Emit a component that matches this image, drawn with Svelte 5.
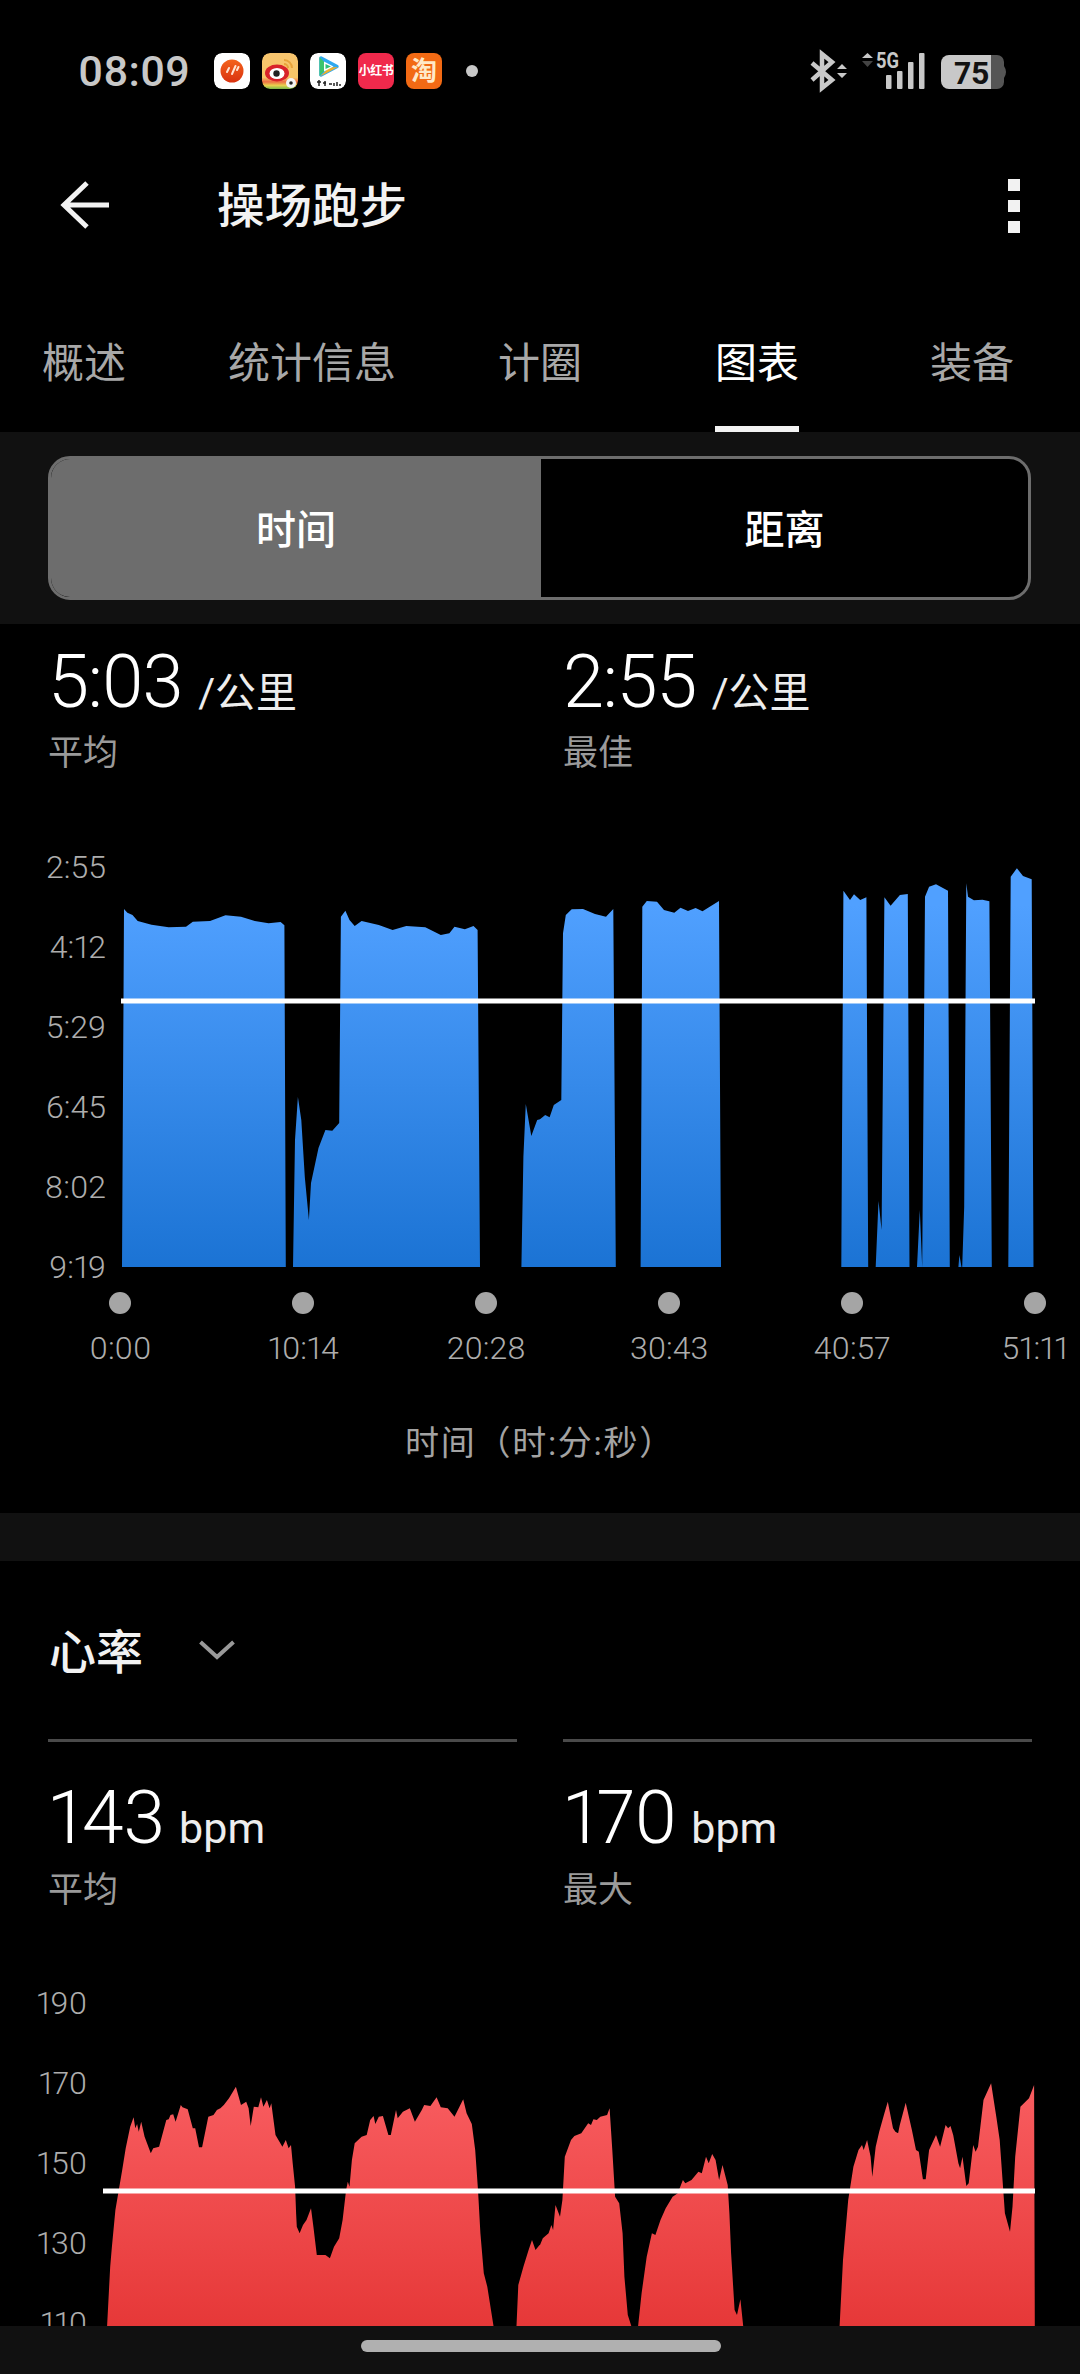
<script>
  const tabs = ['概述', '统计信息', '计圈', '图表', '装备'];
  const paceLabels = ['2:55', '4:12', '5:29', '6:45', '8:02', '9:19'];
  const hrLabels = ['190', '170', '150', '130', '110'];
  const ticks = ['0:00', '10:14', '20:28', '30:43', '40:57', '51:11'];

  const toPath = (pts) => 'M' + pts.map((p) => p.join(' ')).join('L') + 'Z';

  // pace blocks, page px
  const paceBlocks = [
    [[122,1267],[124,909],[127.4,912.7],[132.5,915],[137.7,921],[151.5,924.7],[168.7,927.3],[186,926.7],[192.8,921.7],[210,921],[225.5,915.3],[241,916.7],[254.8,921],[268.6,923.3],[280.6,922],[284.4,925.3],[285.8,1267]],
    [[293,1267],[295,1140],[297.9,1097],[301.3,1120],[304.8,1177],[308.9,1220],[311,1183],[318.5,1148],[325.4,1130],[332.3,1130.7],[339.2,1123],[340.9,916.7],[345.4,910.7],[349.5,920],[354.7,926],[361.6,921],[378.8,925],[392.6,930],[406.3,926],[425.3,927.3],[440.8,935],[449.4,933.3],[454.5,926.7],[464.9,929.3],[473.5,926],[477.6,930],[480,1267]],
    [[521.4,1267],[523.4,1156.7],[525.8,1104],[531.3,1136],[537.2,1120],[540,1119.3],[545.2,1115],[549.6,1117.3],[553.8,1105],[561.3,1100],[563,933.3],[565.8,915],[571.7,909.3],[583,909],[595,914],[606,916.7],[613.3,909],[615.8,1267]],
    [[640.6,1267],[642.3,906.7],[646.8,901],[657,901.7],[664,910],[674.3,912.7],[680.5,907.7],[688,911],[695.6,908],[702.5,911.3],[719,901],[721,1267]],
    [[841.3,1267],[843.4,890.7],[850,900],[854,894.3],[860.2,900],[866.4,897.3],[868.2,1267]],
    [[875.7,1267],[878.5,1201],[881.6,1230],[884.4,897.3],[890.6,905.7],[899.9,895],[907.8,894],[909.5,1267]],
    [[917,1267],[919.8,1210],[922.2,1267],[925,896.7],[929.1,886.7],[936,884.3],[948,890.7],[949.8,1267]],
    [[958.4,1267],[959.4,1255],[961.5,1267],[962.2,1267],[964.2,1206.7],[966.3,883.3],[968,896.7],[973.9,900.3],[982.5,899.7],[989.4,901.3],[991.8,1267]],
    [[1008.3,1267],[1010.7,876.7],[1016.9,868.3],[1023,876],[1031.7,879.3],[1033.5,1267]]
  ].map(toPath);

  // heart rate outline, traced on the crops: x is 2.904/px, y is 3/px from 2000
  const fromCrop = (base) => ([x, y]) => [+(x / 2.904 + base).toFixed(1), +(2000 + y / 3).toFixed(1)];
  const L = fromCrop(0);
  const R = fromCrop(540);

  const hrLeft = [[311,978],[320,800],[325,740],[335,630],[345,570],[355,510],[365,445],[378,380],[388,352],[393,385],[398,372],[403,395],[410,365],[420,410],[438,460],[445,445],[462,440],[483,360],[490,358],[495,345],[503,343],[510,365],[525,315],[530,322],[545,328],[560,385],[567,385],[578,442],[587,442],[605,350],[620,345],[630,330],[640,325],[650,315],[665,295],[685,260],[700,315],[715,305],[722,325],[728,378],[737,320],[750,322],[758,292],[765,320],[775,300],[783,325],[788,310],[800,405],[820,440],[830,420],[838,445],[845,435],[850,490],[857,560],[860,640],[862,680],[870,700],[880,675],[890,660],[903,625],[910,680],[920,765],[945,765],[958,775],[970,740],[985,715],[995,660],[1005,570],[1010,545],[1015,560],[1022,480],[1030,430],[1050,410],[1065,405],[1075,360],[1085,348],[1090,372],[1100,350],[1112,348],[1128,405],[1135,405],[1150,330],[1155,355],[1170,335],[1190,325],[1205,365],[1225,330],[1232,315],[1250,318],[1268,292],[1280,322],[1300,325],[1320,350],[1345,298],[1355,340],[1370,372],[1380,450],[1388,570],[1395,700],[1405,820],[1415,860],[1433,978]];
  const hrMidA = [[1500,978],[1505,855],[1520,800],[1535,750],[1545,720],[1555,750],[1567,735]];
  const hrMidB = [[0,735],[8,715],[25,700],[33,675],[38,690],[45,615],[58,650],[65,600],[72,470],[90,420],[100,408],[120,400],[140,370],[148,375],[155,358],[165,360],[175,350],[195,345],[202,325],[210,450],[218,590],[230,610],[240,700],[245,830],[255,945],[265,978]];
  const hrThird = [[285,978],[295,880],[310,770],[325,700],[335,705],[350,660],[365,625],[385,590],[400,580],[415,540],[422,550],[440,540],[460,515],[470,520],[482,470],[490,490],[500,462],[510,480],[520,540],[530,495],[545,555],[550,640],[555,760],[565,930],[572,945],[582,898],[590,978]];
  const hrLast = [[870,978],[880,780],[895,600],[910,500],[925,450],[935,435],[940,450],[950,420],[960,470],[965,530],[975,440],[985,395],[1000,340],[1010,305],[1025,385],[1032,395],[1040,400],[1045,375],[1062,308],[1080,390],[1092,450],[1100,455],[1112,538],[1120,538],[1130,450],[1150,405],[1162,440],[1178,375],[1185,385],[1192,378],[1200,405],[1215,490],[1220,505],[1227,470],[1238,558],[1245,550],[1258,435],[1265,455],[1272,440],[1288,300],[1310,250],[1325,350],[1335,420],[1350,640],[1365,695],[1372,620],[1380,470],[1395,320],[1420,295],[1435,255],[1437,978]];

  const hrBlocks = [
    hrLeft.map(L),
    [...hrMidA.map(L), ...hrMidB.map(R)],
    hrThird.map(R),
    hrLast.map(R)
  ].map(toPath);
</script>

<div class="page">
  <div class="status">
    <span class="clock">08:09</span>
    <div class="apps">
      <svg class="app" viewBox="0 0 36 36">
        <defs>
          <linearGradient id="redCircle" x1="0" y1="0" x2="0" y2="1">
            <stop offset="0" stop-color="#f4631c" />
            <stop offset="1" stop-color="#d9320f" />
          </linearGradient>
        </defs>
        <rect width="36" height="36" rx="8" fill="#fff" />
        <circle cx="18" cy="18" r="11.500" fill="url(#redCircle)" />
        <path d="M13 19l2-4M18 21l3.500-8M23 17l1.500-3" stroke="#ffe3d2" stroke-width="2" stroke-linecap="round" />
      </svg>
      <svg class="app" viewBox="0 0 36 36">
        <defs>
          <linearGradient id="weiboBg" x1="0" y1="0" x2="0" y2="1">
            <stop offset="0" stop-color="#f8c56f" />
            <stop offset="0.68" stop-color="#f6c566" />
            <stop offset="0.8" stop-color="#ee6f45" />
            <stop offset="0.9" stop-color="#e8d24e" />
            <stop offset="1" stop-color="#79b84b" />
          </linearGradient>
        </defs>
        <rect width="36" height="36" rx="8" fill="url(#weiboBg)" />
        <path d="M22 7a8 8 0 0 1 8 8M22 11a4 4 0 0 1 4 4" fill="none" stroke="#e8a33a" stroke-width="2" />
        <ellipse cx="15" cy="20" rx="12" ry="8.500" fill="#d8232a" />
        <ellipse cx="15" cy="20.500" rx="7.500" ry="5.500" fill="#fff" />
        <circle cx="14.500" cy="20.500" r="3.200" fill="#222" />
        <circle cx="29" cy="30" r="5" fill="#f4f4f4" />
        <circle cx="29" cy="30" r="1.800" fill="#222" />
      </svg>
      <svg class="app" viewBox="0 0 36 36">
        <rect width="36" height="36" rx="8" fill="#fff" />
        <path d="M11 5L27 13.500 11 22z" fill="#2fa9ef" stroke="#2fa9ef" stroke-width="3.500" stroke-linejoin="round" />
        <path d="M9.500 4v19l9-9.500z" fill="#3cc46c" />
        <path d="M28 14L10 23.500l9-9z" fill="#f0b02c" />
        <path d="M14 8.500l9.500 5-9.500 5z" fill="#fff" />
        <path d="M15.500 11l5.500 2.500-5.500 2.500z" fill="#2fc07a" />
        <path d="M7 29h4M9 27v6M13 30h3M15 28v5M19 31h3M24 30v3M27 29v4M30 31v2" stroke="#222" stroke-width="1.500" />
      </svg>
      <span class="app red">小红书</span>
      <span class="app orange">淘</span>
    </div>
    <span class="more-dot"></span>
    <svg class="sys" viewBox="805 48 205 46">
      <path d="M812 63l20 17-10 8V54l10 8-20 18" fill="none" stroke="#c8c8c8" stroke-width="4.500" />
      <path d="M837 69l5-5 5 5zM837 73l5 5 5-5z" fill="#c8c8c8" />
      <path d="M862 58l5.500-5 5.500 5z" fill="#c8c8c8" />
      <path d="M862 61l5.500 6 5.500-6z" fill="#444" />
      <text class="net" x="876" y="68" textLength="23" lengthAdjust="spacingAndGlyphs">5G</text>
      <rect x="886" y="75" width="5.500" height="14" rx="1" fill="#c8c8c8" />
      <rect x="897" y="71" width="5.500" height="18" rx="1" fill="#c8c8c8" />
      <rect x="908" y="62" width="5.500" height="27" rx="1" fill="#c8c8c8" />
      <rect x="919" y="53" width="5.500" height="36" rx="1" fill="#c8c8c8" />
      <path d="M949 55h42v34h-42a8 8 0 0 1-8-8V63a8 8 0 0 1 8-8z" fill="#c8c8c8" />
      <path d="M991 55h6a7 7 0 0 1 7 7v20a7 7 0 0 1-7 7h-6zM1004 66q4 6 0 12z" fill="#555" />
      <text class="batt" x="954" y="84">75</text>
    </svg>
  </div>

  <div class="header">
    <svg class="back" viewBox="0 0 50 50">
      <path d="M50 25H6M28 3L5 25l23 22" fill="none" stroke="#f2f2f2" stroke-width="5" />
    </svg>
    <span class="title">操场跑步</span>
    <div class="menu"><i></i><i></i><i></i></div>
  </div>

  <div class="tabs">
    {#each tabs as tab, i}
      <div class="tab"><span class:active={i === 3}>{tab}</span></div>
    {/each}
  </div>

  <div class="band seg-band">
    <div class="seg">
      <div class="seg-item on">时间</div>
      <div class="seg-item">距离</div>
    </div>
  </div>

  <div class="stats pace">
    <div>
      <div class="value"><b>5:03</b><span>/公里</span></div>
      <div class="caption">平均</div>
    </div>
    <div>
      <div class="value"><b>2:55</b><span>/公里</span></div>
      <div class="caption">最佳</div>
    </div>
  </div>

  <div class="chart pace-chart">
    <div class="y-axis">
      {#each paceLabels as label}
        <span>{label}</span>
      {/each}
    </div>
    <svg class="plot" width="974" height="434" viewBox="106 850 974 434">
      <defs>
        <linearGradient id="blue" gradientUnits="userSpaceOnUse" x1="0" y1="905" x2="0" y2="1267">
          <stop offset="0" stop-color="#50a0ff" />
          <stop offset="1" stop-color="#1b73d4" />
        </linearGradient>
      </defs>
      {#each paceBlocks as d}
        <path {d} fill="url(#blue)" />
      {/each}
      <rect x="121" y="998.500" width="914" height="5" fill="#fff" />
    </svg>
  </div>

  <div class="ticks">
    {#each ticks as tick}
      <div class="tick"><i></i><span>{tick}</span></div>
    {/each}
  </div>
  <div class="axis-title">时间（时:分:秒）</div>

  <div class="band gap-band"></div>

  <div class="section-head">
    <span>心率</span>
    <svg class="chevron" viewBox="0 0 36 20">
      <path d="M1.500 2L18 17 34.500 2" fill="none" stroke="#999" stroke-width="4" />
    </svg>
  </div>

  <div class="stats hr">
    <div class="ruled">
      <div class="value"><b>143</b><span>bpm</span></div>
      <div class="caption">平均</div>
    </div>
    <div class="ruled">
      <div class="value"><b>170</b><span>bpm</span></div>
      <div class="caption">最大</div>
    </div>
  </div>

  <div class="chart hr-chart">
    <div class="y-axis short">
      {#each hrLabels as label}
        <span>{label}</span>
      {/each}
    </div>
    <svg class="plot" width="993" height="340" viewBox="87 1986 993 340">
      <defs>
        <linearGradient id="red" gradientUnits="userSpaceOnUse" x1="0" y1="2090" x2="0" y2="2326">
          <stop offset="0" stop-color="#f85c5f" />
          <stop offset="1" stop-color="#e63838" />
        </linearGradient>
      </defs>
      {#each hrBlocks as d}
        <path {d} fill="url(#red)" />
      {/each}
      <rect x="103" y="2188.500" width="932" height="5" fill="#fff" />
    </svg>
  </div>

  <div class="nav"><i></i></div>
</div>

<style>
  :global(body) {
    margin: 0;
    background: #000;
  }

  .page {
    width: 1080px;
    height: 2374px;
    overflow: hidden;
    background: #000;
    color: #fff;
    font-family: Roboto, "Noto Sans CJK SC", sans-serif;
    font-variant-numeric: proportional-nums;
  }

  .status {
    height: 142px;
    display: flex;
    align-items: center;
    padding-left: 78px;
  }

  .clock {
    font-size: 43px;
    font-weight: 500;
    color: #c8c8c8;
    width: 136px;
  }

  .apps {
    display: flex;
    gap: 12px;
  }

  .app {
    width: 36px;
    height: 36px;
    border-radius: 8px;
    display: block;
  }

  .red {
    background: #f0294c;
    color: #fff;
    font-size: 12px;
    letter-spacing: -0.5px;
    font-weight: 700;
    line-height: 36px;
    text-align: center;
    white-space: nowrap;
  }

  .orange {
    background: #f26a14;
    color: #ffe9c8;
    font-size: 26px;
    font-weight: 700;
    line-height: 36px;
    text-align: center;
  }

  .more-dot {
    width: 12px;
    height: 12px;
    border-radius: 50%;
    background: #c8c8c8;
    margin-left: 24px;
  }

  .sys {
    width: 205px;
    height: 46px;
    margin-left: auto;
    margin-right: 70px;
  }

  .net {
    font-size: 22px;
    font-weight: 700;
    fill: #c8c8c8;
  }

  .batt {
    font-size: 32px;
    font-weight: 700;
    fill: #111;
  }

  .header {
    height: 128px;
    display: flex;
    align-items: center;
    padding: 0 60px 0 59px;
  }

  .back {
    width: 50px;
    height: 50px;
    margin-bottom: 3px;
  }

  .title {
    margin: 0 0 7px 108px;
    font-size: 47.500px;
    font-weight: 500;
    color: #f2f2f2;
  }

  .menu {
    margin-left: auto;
    display: flex;
    flex-direction: column;
    gap: 9px;
  }

  .menu i {
    width: 12px;
    height: 12px;
    background: #f2f2f2;
  }

  .tabs {
    height: 162px;
    box-sizing: border-box;
    padding-top: 64px;
    display: grid;
    grid-template-columns: 168px 288px 168px 266px 164px;
  }

  .tab {
    text-align: center;
  }

  .tab span {
    display: inline-block;
    font-size: 42px;
    line-height: 60px;
    padding-bottom: 32px;
    border-bottom: 6px solid transparent;
    color: #a8a8a8;
  }

  .tab span.active {
    color: #fff;
    border-bottom-color: #f2f2f2;
  }

  .band {
    background: #111;
  }

  .seg-band {
    padding: 24px 49px 24px 48px;
  }

  .seg {
    height: 144px;
    box-sizing: border-box;
    display: flex;
    border: 3px solid #6d6d6d;
    border-radius: 22px;
    overflow: hidden;
    background: #000;
  }

  .seg-item {
    flex: 1;
    box-sizing: border-box;
    padding-bottom: 3px;
    font-size: 40px;
    font-weight: 500;
    display: flex;
    align-items: center;
    justify-content: center;
  }

  .seg-item.on {
    flex: none;
    width: 490px;
    background: #6d6d6d;
  }

  .stats {
    display: grid;
    grid-template-columns: 469px 469px;
    column-gap: 46px;
    padding: 0 48px;
  }

  .pace {
    padding-top: 22px;
  }

  .value {
    display: flex;
    align-items: baseline;
    height: 72px;
    line-height: 72px;
    white-space: nowrap;
  }

  .value b {
    font-size: 75px;
    font-weight: 300;
    color: #fff;
    margin-left: 1px;
  }

  .pace .value b {
    font-size: 74px;
    letter-spacing: -1.500px;
    margin-left: 0;
  }

  .value span {
    font-size: 41px;
    margin-left: 16px;
    color: #ededed;
  }

  .hr .value span {
    font-size: 43px;
    margin-left: 14px;
  }

  .caption {
    margin-top: 13px;
    font-size: 35px;
    line-height: 46px;
    color: #9a9a9a;
  }

  .chart {
    display: flex;
    margin-top: 73px;
  }

  .hr-chart {
    height: 340px;
    overflow: hidden;
    margin-top: 72px;
  }

  .y-axis {
    width: 106px;
    flex: none;
    display: flex;
    flex-direction: column;
    gap: 46px;
    align-items: flex-end;
    font-size: 32px;
    font-weight: 300;
    line-height: 34px;
    color: #adadad;
  }

  .y-axis.short {
    width: 87px;
  }

  .plot {
    display: block;
    flex: none;
  }

  .ticks {
    margin-top: 8px;
    padding-left: 29px;
    display: grid;
    grid-template-columns: repeat(6, 182.900px);
  }

  .tick {
    display: flex;
    flex-direction: column;
    align-items: center;
    gap: 17px;
    font-size: 32px;
    font-weight: 300;
    line-height: 34px;
    color: #adadad;
  }

  .tick i {
    width: 22px;
    height: 22px;
    border-radius: 50%;
    background: #a5a5a5;
  }

  .axis-title {
    margin-top: 55px;
    text-align: center;
    font-size: 34px;
    letter-spacing: 1.700px;
    line-height: 46px;
    color: #a3a3a3;
  }

  .gap-band {
    height: 48px;
    margin-top: 47px;
  }

  .section-head {
    height: 60px;
    margin-top: 57px;
    padding-left: 49px;
    margin-bottom: 3px;
    display: flex;
    align-items: center;
    font-size: 47px;
    font-weight: 500;
    color: #f2f2f2;
  }

  .chevron {
    width: 36px;
    height: 20px;
    margin: 4px 0 0 56px;
  }

  .hr {
    margin-top: 61px;
  }

  .ruled {
    border-top: 3px solid #4a4a4a;
    padding-top: 39px;
  }

  .hr .caption {
    margin-top: 15px;
  }

  .nav {
    height: 48px;
    box-sizing: border-box;
    padding-top: 14px;
    background: #111;
    display: flex;
    justify-content: center;
  }

  .nav i {
    width: 360px;
    height: 12px;
    border-radius: 6px;
    background: #b0b0b0;
    margin-left: 2px;
  }
</style>
